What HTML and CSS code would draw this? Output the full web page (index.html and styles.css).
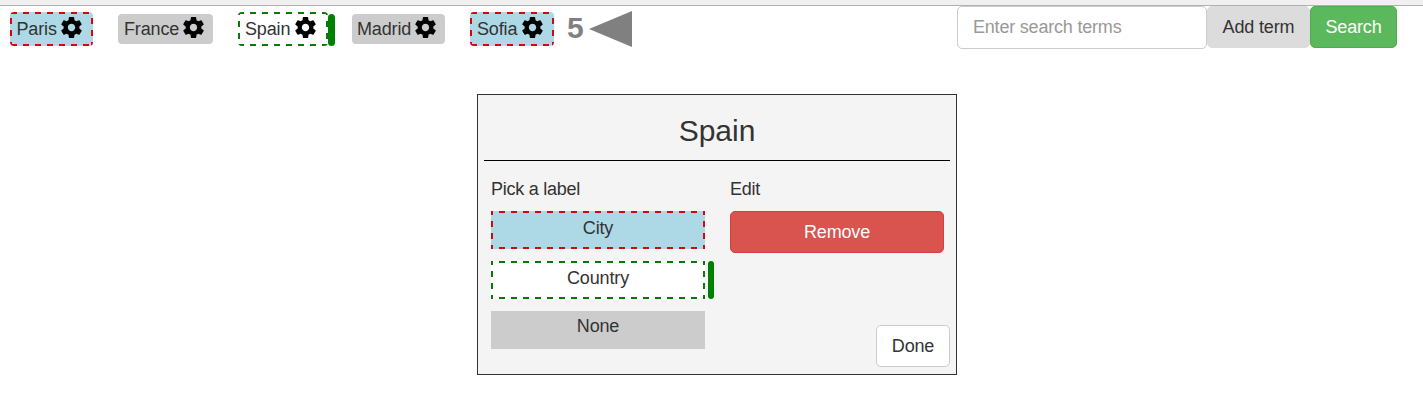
FILE: index.html
```html
<!DOCTYPE html>
<html lang="en">
<head>
<meta charset="utf-8">
<title>Search terms</title>
<link rel="stylesheet" href="styles.css">
</head>
<body>
<svg width="0" height="0" class="defs" aria-hidden="true">
  <symbol id="gear" viewBox="2 2 20 20"><path d="M19.43 12.98c.04-.32.07-.64.07-.98s-.03-.66-.07-.98l2.11-1.65c.19-.15.24-.42.12-.64l-2-3.46c-.12-.22-.39-.3-.61-.22l-2.49 1c-.52-.4-1.08-.73-1.69-.98l-.38-2.65C14.46 2.18 14.25 2 14 2h-4c-.25 0-.46.18-.49.42l-.38 2.65c-.61.25-1.17.59-1.69.98l-2.49-1c-.23-.09-.49 0-.61.22l-2 3.46c-.13.22-.07.49.12.64l2.11 1.65c-.04.32-.07.65-.07.98s.03.66.07.98l-2.11 1.65c-.19.15-.24.42-.12.64l2 3.46c.12.22.39.3.61.22l2.49-1c.52.4 1.08.73 1.69.98l.38 2.65c.03.24.24.42.49.42h4c.25 0 .46-.18.49-.42l.38-2.65c.61-.25 1.17-.59 1.69-.98l2.49 1c.23.09.49 0 .61-.22l2-3.46c.12-.22.07-.49-.12-.64l-2.11-1.65zM12 15.5c-1.93 0-3.5-1.57-3.5-3.5s1.57-3.5 3.5-3.5 3.5 1.57 3.5 3.5-1.57 3.5-3.5 3.5z"/></symbol>
</svg>
<div class="strip"></div>
<header class="bar">
  <div class="terms">
    <span class="term city paris">Paris<svg class="gear"><use href="#gear"/></svg></span>
    <span class="term none france">France<svg class="gear"><use href="#gear"/></svg></span>
    <span class="term country spain">Spain<svg class="gear"><use href="#gear"/></svg></span>
    <span class="cursor"></span>
    <span class="term none madrid">Madrid<svg class="gear"><use href="#gear"/></svg></span>
    <span class="term city sofia">Sofia<svg class="gear"><use href="#gear"/></svg></span>
    <span class="count">5</span>
    <svg class="arrow" viewBox="0 0 43 36"><path d="M0 18L43 0v36z"/></svg>
  </div>
  <form class="search">
    <input class="field" type="text" placeholder="Enter search terms">
    <button class="btn add" type="button">Add term</button>
    <button class="btn go" type="button">Search</button>
  </form>
</header>
<main class="dialog">
  <h1 class="title">Spain</h1>
  <div class="columns">
    <section class="column">
      <p class="caption">Pick a label</p>
      <div class="label city">City</div>
      <div class="label country">Country<span class="selected"></span></div>
      <div class="label none">None</div>
    </section>
    <section class="column">
      <p class="caption">Edit</p>
      <button class="btn remove" type="button">Remove</button>
    </section>
  </div>
  <div class="actions"><button class="btn done" type="button">Done</button></div>
</main>
</body>
</html>
```
FILE: styles.css
```css
* { box-sizing: border-box; }
body {
  margin: 0;
  background: #fff;
  color: #333;
  font: 18px/26px "Liberation Sans", Arial, sans-serif;
  letter-spacing: -0.15px;
}
.defs { display: none; }
.strip { height: 6px; background: #f0f0f0; border-bottom: 1px solid #b0b0b0; }
.bar { display: flex; justify-content: space-between; padding: 0 26px 0 10px; height: 43px; }
.terms { display: flex; align-items: flex-start; padding-top: 6px; }
.term {
  display: flex;
  height: 34px;
  padding: 2px 0 0 4px;
  border: 2px solid transparent;
  border-radius: 4px;
  --dash-x: 1px;
  --dash-y: 6px;
}
.gear { width: 21px; height: 21px; margin: 1px 0 0 auto; fill: #000; }

/* Dashed edges: 6px dashes with 6px gaps, shifted by --dash-x and --dash-y */
.city, .country {
  background-image:
    linear-gradient(90deg, var(--ink) 50%, transparent 50%),
    linear-gradient(90deg, var(--ink) 50%, transparent 50%),
    linear-gradient(var(--ink) 50%, transparent 50%),
    linear-gradient(var(--ink) 50%, transparent 50%);
  background-size: 12px 2px, 12px 2px, 2px 12px, 2px 12px;
  background-repeat: repeat-x, repeat-x, repeat-y, repeat-y;
  background-position: var(--dash-x) 0, var(--dash-x) 100%, 0 var(--dash-y), 100% var(--dash-y);
  background-origin: border-box;
}
.city { background-color: lightblue; --ink: #d9040f; }
.country { background-color: #fff; --ink: #087a08; }
.none { background: #ccc; }
.term.none { height: 30px; margin-top: 2px; padding-top: 2px; border: 0; padding-left: 6px; }
.paris { width: 83px; margin-right: 25px; padding-right: 9.5px; padding-left: 4.5px; }
.term.france { width: 95px; margin-right: 25px; padding-right: 9.5px; }
.spain { width: 90px; padding: 2px 10.5px 0 5px; --dash-x: 0px; --dash-y: 9px; }
.cursor { width: 7px; height: 32px; margin: 2px 17px 0 0; border-radius: 4px; background: green; }
.term.madrid { width: 93px; margin-right: 25px; padding: 2px 9.5px 0 5px; }
.sofia { width: 84px; margin-right: 13px; padding: 2px 9.5px 0 5px; }
.count { width: 22px; font-size: 30px; font-weight: bold; line-height: 32px; color: gray; }
.arrow { width: 43px; height: 36px; margin-top: -1px; fill: gray; }
.search { display: flex; align-items: flex-start; }
.field {
  width: 250px;
  height: 43px;
  padding: 0 15px 1px;
  border: 1px solid #ccc;
  border-radius: 5px;
  font: inherit;
  letter-spacing: -0.2px;
}
.field::placeholder { color: #999; opacity: 1; }
.btn {
  height: 42px;
  padding: 0;
  border: 1px solid #ccc;
  border-radius: 5px;
  color: #333;
  font: inherit;
  letter-spacing: -0.15px;
}
.add { width: 103px; background: #dcdcdc; border-color: #dcdcdc; }
.go { width: 87px; background: #5cb85c; border-color: #4cae4c; color: #fff; }
.dialog {
  width: 480px;
  height: 281px;
  margin: 45px 0 0 477px;
  padding: 0 6px 7px;
  border: 1px solid #333;
  background: #f4f4f4;
  display: flex;
  flex-direction: column;
}
.title {
  height: 66px;
  margin: 0;
  padding-top: 19px;
  border-bottom: 1px solid #000;
  font-size: 30px;
  font-weight: normal;
  line-height: 33px;
  letter-spacing: 0;
  text-align: center;
}
.columns { display: flex; gap: 25px; padding: 15px 6px 0 7px; }
.column { width: 214px; }
.caption { margin: 0 0 9px; letter-spacing: -0.25px; }
.label {
  position: relative;
  height: 38px;
  margin-bottom: 12px;
  padding-top: 2px;
  border: 2px solid transparent;
  text-align: center;
  --dash-x: -4px;
  --dash-y: -2px;
}
.label.none { border: 0; margin-bottom: 0; }
.selected {
  position: absolute;
  top: -2px;
  right: -11px;
  width: 6px;
  height: 38px;
  border-radius: 3px;
  background: green;
}
.remove { width: 100%; background: #d9534f; border-color: #d43f3a; color: #fff; }
.actions { display: flex; justify-content: flex-end; margin-top: -24px; }
.done { width: 74px; background: #fff; }
```
